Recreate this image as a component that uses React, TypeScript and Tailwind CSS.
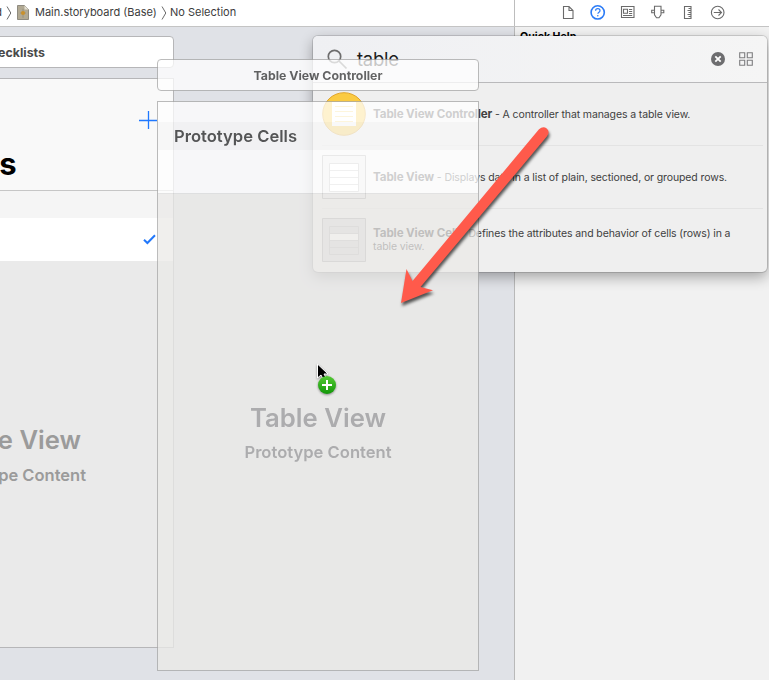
import type { ReactNode } from "react";

function Chevron() {
  return (
    <svg width="6" height="16" viewBox="0 0 6 16" fill="none" stroke="#6b6b6b" strokeWidth="1" className="shrink-0">
      <path d="M1 1.5 4.8 8 1 14.5" />
    </svg>
  );
}

function StoryboardIcon() {
  return (
    <svg width="12" height="15" viewBox="0 0 12 15" className="shrink-0">
      <path d="M.5.5h7l4 4v10H.5z" fill="#b1a993" stroke="#8f8b80" />
      <path d="M7.5.5v4h4z" fill="#e4dfd2" />
      <path d="M6 3.8v9M3 8h6" stroke="#97907c" strokeWidth="1" />
      <circle cx="6" cy="8" r="2.1" fill="#c9912c" />
    </svg>
  );
}

function JumpBar() {
  return (
    <div className="flex h-[25px] w-[514px] items-center overflow-hidden text-[11px] text-[#3c3c3c]">
      <span className="-ml-[5px] w-[7px] shrink-0 text-right">d</span>
      <span className="ml-[4px] flex"><Chevron /></span>
      <span className="ml-[5px] flex"><StoryboardIcon /></span>
      <span className="ml-[6px] w-[126px] shrink-0 whitespace-nowrap">Main.storyboard (Base)</span>
      <Chevron />
      <span className="ml-[3px] whitespace-nowrap">No Selection</span>
    </div>
  );
}

function InspectorTabs() {
  return (
    <svg width="254" height="26" viewBox="515 0 254 26" fill="none" stroke="#6a6a6a" strokeWidth="1.1">
      <path d="M563.5 6.5h5.500l4 4v8h-9.500zM569 6.500v4h4" />
      <circle cx="597.7" cy="12.4" r="6.6" stroke="#2b7bf6" strokeWidth="1.6" />
      <path d="M595.6 10.7c0-2.7 4.4-2.7 4.4 0 0 1.5-2.1 1.5-2.1 3.1" stroke="#2b7bf6" strokeWidth="1.2" />
      <circle cx="597.8" cy="15.8" r=".8" fill="#2b7bf6" stroke="none" />
      <path d="M621.5 6.5h12.500v11h-12.500z" />
      <path d="M623.5 9.300h4v4h-4zM629 9.500h3.200M629 11.500h3.200M629 13.500h3.200M623 15.500h9.200" />
      <path d="M654.500 6.300h6.500v8.500l-2 2.900h-2.500l-2-2.900zM654.500 10.300h-2.800v2.500h2.800M661 10.300h2.800v2.500h-2.800" />
      <path d="M684.500 6.500h6.500v12h-6.500zM691 8.500h-2.500M691 10.500h-3.500M691 12.500h-2.500M691 14.500h-3.500M691 16.500h-2.500" />
      <circle cx="717.700" cy="12.500" r="6.300" />
      <path d="M713.800 12.500h7.500M718.500 9.500l3 3-3 3" />
    </svg>
  );
}

function ChecklistsScene() {
  return (
    <div className="absolute -left-[148px] top-[9px] flex w-[322px] flex-col gap-[10px]">
      <div className="flex h-[32px] items-center rounded-[4px] border border-[#b6b6b8] bg-white pl-[118px] pt-[2px] text-[12.4px] font-bold text-[#4a4a4a]">
        <span className="w-[74px] shrink-0 whitespace-nowrap text-right">Checklists</span>
      </div>
      <div className="flex h-[570px] flex-col border border-[#b6b6b8] bg-[#eaeaea]">
        <div className="flex h-[112px] shrink-0 flex-col border-b border-[#c6c6c6] bg-[#f9f9f9]">
          <div className="flex h-[68px] items-end justify-end pr-[16px] pb-[18px]">
            <svg width="18" height="18" viewBox="0 0 18 18" stroke="#1f78ff" strokeWidth="1.300"><path d="M9.500 0v18M0 9.500h18" /></svg>
          </div>
          <div className="-mt-[1px] w-[163.5px] text-right text-[31px] font-bold leading-[36px] text-black">Checklists</div>
        </div>
        <div className="h-[27px] shrink-0 bg-[#f5f5f5]" />
        <div className="flex h-[43px] shrink-0 items-center justify-end bg-white pr-[17px]">
          <svg width="13" height="11" viewBox="0 0 13 11" fill="none" stroke="#2278fb" strokeWidth="2"><path d="M1 5.700 4.400 9 12 1.300" /></svg>
        </div>
        <div className="flex flex-col pt-[161px] pl-[28px] text-[#9b9b9b]">
          <span className="w-[200px] whitespace-nowrap text-right text-[25.6px] font-semibold leading-[36px]">Table View</span>
          <span className="mt-[5px] w-[205px] whitespace-nowrap text-right text-[16.5px] font-semibold leading-[24px]">Prototype Content</span>
        </div>
      </div>
    </div>
  );
}

function GhostController() {
  return (
    <div className="absolute left-[157px] top-[32px] flex w-[322px] flex-col gap-[10px] opacity-75">
      <div className="flex h-[32px] items-center justify-center rounded-[4px] border border-[#a6a6a6] bg-white pt-[2px] text-[12.3px] font-bold text-[#363636]">
        <span className="whitespace-nowrap">Table View Controller</span>
      </div>
      <div className="flex h-[570px] flex-col border border-[#a6a6a6] bg-[#ebeae8]">
        <div className="h-[20px] shrink-0 bg-white" />
        <div className="flex h-[28px] shrink-0 items-center bg-[#f7f7f7] pl-[16px] pt-[1px] text-[16.6px] font-semibold text-[#262626]">
          <span className="whitespace-nowrap">Prototype Cells</span>
        </div>
        <div className="h-[44px] shrink-0 border-b border-[#dedede] bg-white" />
        <div className="flex flex-col items-center pt-[206px] text-[#9b9b9b]">
          <span className="whitespace-nowrap text-[25.7px] font-semibold leading-[36px]">Table View</span>
          <span className="mt-[4px] whitespace-nowrap text-[16.6px] font-semibold leading-[24px]">Prototype Content</span>
        </div>
      </div>
    </div>
  );
}

function ControllerIcon() {
  return (
    <svg width="44" height="44" viewBox="0 0 44 44" className="shrink-0">
      <circle cx="22" cy="22" r="21.300" fill="#fbcb42" stroke="#e0a52b" />
      <path d="M10 10h24v24H10z" fill="white" />
      <path d="M13 14.500h18M13 19.500h18M13 24.500h18M13 29.500h18" stroke="#f8d873" />
    </svg>
  );
}

function TableIcon({ cell }: { cell?: boolean }) {
  return (
    <svg width="44" height="44" viewBox="0 0 44 44" className="shrink-0">
      <path d="M.5.5h43v43H.5z" fill={cell ? "#d8d8d8" : "#e9e9e9"} stroke="#a8a8a8" />
      <path d="M7.500 8.500h29v28h-29z" fill={cell ? "#d4d4d4" : "white"} stroke="#b8b8b8" />
      {cell && <path d="M8 15.500h28v7H8z" fill="white" />}
      <path d="M8 15.500h28M8 22.500h28M8 29.500h28" stroke={cell ? "#bcbcbc" : "#c6c6c6"} />
    </svg>
  );
}

function ResultRow({ icon, children, last }: { icon: ReactNode; children: ReactNode; last?: boolean }) {
  return (
    <div className={`ml-[9px] mr-[4px] flex shrink-0 items-center gap-[7px] ${last ? "h-[62px]" : "h-[63px] border-b border-[#e3e3e3]"}`}>
      {icon}
      <div className="whitespace-nowrap text-[10.5px] leading-[13px] tracking-[-0.11px] text-[#404040]">{children}</div>
    </div>
  );
}

function LibraryPopup() {
  return (
    <div className="absolute left-[313px] top-[9px] flex h-[236px] w-[454px] flex-col rounded-[5px] bg-[#efefef] shadow-[0_0_0_1px_rgba(0,0,0,0.13),0_5px_14px_rgba(0,0,0,0.33)]">
      <div className="flex h-[47px] shrink-0 items-center rounded-t-[5px] border-b border-[#b9b9bb] bg-linear-to-r from-[#eff0f3] to-[#f5f5f5] pl-[14px] pr-[14px]">
        <svg width="21" height="21" viewBox="0 0 21 21" fill="none" stroke="#6d6d6d" strokeWidth="1.700"><circle cx="7.500" cy="7.500" r="6.200" /><path d="m12 12 7.500 7.500" /></svg>
        <span className="ml-[9px] text-[18.500px] leading-none tracking-[-0.3px] text-[#1c1c1c]">table</span>
        <svg className="ml-auto" width="14" height="14" viewBox="0 0 14 14"><circle cx="7" cy="7" r="7" fill="#6d6d6f" /><path d="m4.300 4.300 5.400 5.400m0-5.400L4.300 9.700" stroke="white" strokeWidth="1.800" /></svg>
        <svg className="ml-[14px]" width="14" height="14" viewBox="0 0 14 14" fill="none" stroke="#7d7d7f" strokeWidth="1.100"><path d="M.7.7h5v5h-5zM8.300.7h5v5h-5zM.7 8.300h5v5h-5zM8.300 8.300h5v5h-5z" /></svg>
      </div>
      <ResultRow icon={<ControllerIcon />}><b className="text-[11.6px] font-bold">Table View Controller</b> - A controller that manages a table view.</ResultRow>
      <ResultRow icon={<TableIcon />}><b className="text-[11.6px] font-bold">Table View</b> - Displays data in a list of plain, sectioned, or grouped rows.</ResultRow>
      <ResultRow icon={<TableIcon cell />} last><b className="text-[11.6px] font-bold">Table View Cell</b> - Defines the attributes and behavior of cells (rows) in a<br />table view.</ResultRow>
    </div>
  );
}

function Annotation() {
  return (
    <svg className="absolute left-[390px] top-[93px] drop-shadow-[1px_3px_1.5px_rgba(0,0,0,0.65)]" width="170" height="200" viewBox="390 120 170 200">
      <path d="M539 129.300Q543 125.500 546.700 128.500Q550.500 132 546.800 136.600L420.500 287L433 290.300L401 303L406.500 269L412.500 281Z" fill="#ff5a4b" />
    </svg>
  );
}

function DragCursor() {
  return (
    <svg className="absolute left-[314px] top-[335px] drop-shadow-[0_1px_1px_rgba(0,0,0,0.4)]" width="26" height="36" viewBox="314 362 26 36">
      <defs>
        <linearGradient id="badge" x1="0" y1="0" x2="0" y2="1"><stop stopColor="#55ca35" /><stop offset="1" stopColor="#129808" /></linearGradient>
      </defs>
      <path d="M317.500 364v14l3.500-3 2 4 3-1.500-2-3.500h4z" fill="black" stroke="white" />
      <circle cx="327" cy="385" r="9" fill="url(#badge)" />
      <path d="M327 380v10M322 385h10" stroke="white" strokeWidth="2" />
    </svg>
  );
}

export default function App() {
  return (
    <div className="flex h-[680px] w-[769px] flex-col overflow-hidden bg-white font-[Inter,'Liberation_Sans',sans-serif]">
      <header className="flex h-[27px] shrink-0 border-b border-[#c4c4c4]">
        <JumpBar />
        <div className="w-[255px] border-l border-[#bdbdbd]"><InspectorTabs /></div>
      </header>
      <main className="relative flex h-[653px]">
        <section className="relative w-[514px] overflow-hidden bg-[#e0e2e7]"><ChecklistsScene /></section>
        <aside className="w-[255px] border-l border-[#b9b9b9] bg-[#f1f1f1] pl-[5px] pt-[2px] text-[10.6px] font-bold leading-[16px] text-black">Quick Help</aside>
        <LibraryPopup />
        <GhostController />
        <Annotation />
        <DragCursor />
      </main>
    </div>
  );
}
